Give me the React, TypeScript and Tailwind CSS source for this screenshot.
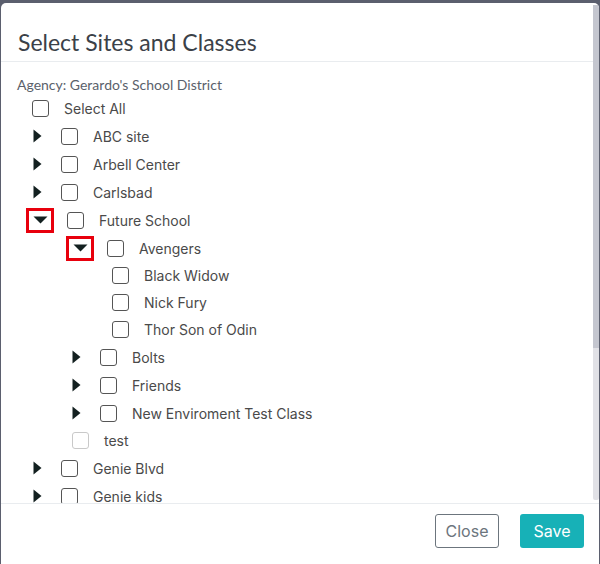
import React from "react";

type Kind = "collapsed" | "expanded" | "leaf" | "disabled";

type Item = {
  label: string;
  kind: Kind;
  pad: string;
};

const items: Item[] = [
  { label: "ABC site", kind: "collapsed", pad: "pl-[32px]" },
  { label: "Arbell Center", kind: "collapsed", pad: "pl-[32px]" },
  { label: "Carlsbad", kind: "collapsed", pad: "pl-[32px]" },
  { label: "Future School", kind: "expanded", pad: "pl-[25px]" },
  { label: "Avengers", kind: "expanded", pad: "pl-[65px]" },
  { label: "Black Widow", kind: "leaf", pad: "pl-[111px]" },
  { label: "Nick Fury", kind: "leaf", pad: "pl-[111px]" },
  { label: "Thor Son of Odin", kind: "leaf", pad: "pl-[111px]" },
  { label: "Bolts", kind: "collapsed", pad: "pl-[71px]" },
  { label: "Friends", kind: "collapsed", pad: "pl-[71px]" },
  { label: "New Enviroment Test Class", kind: "collapsed", pad: "pl-[71px]" },
  { label: "test", kind: "disabled", pad: "pl-[71px]" },
  { label: "Genie Blvd", kind: "collapsed", pad: "pl-[32px]" },
  { label: "Genie kids", kind: "collapsed", pad: "pl-[32px]" },
];

function Checkbox({ disabled }: { disabled?: boolean }) {
  return (
    <span
      className={
        disabled
          ? "block w-[17px] h-[17px] shrink-0 rounded-[3px] border border-[#c9c9c9] bg-white"
          : "block w-[17px] h-[17px] shrink-0 rounded-[3px] border border-[#555] bg-white"
      }
    />
  );
}

function TreeRow({ item }: { item: Item }) {
  if (item.kind === "collapsed") {
    return (
      <div className={`flex items-center h-[28px] ${item.pad}`}>
        <svg width="9" height="14" viewBox="0 0 9 14" className="shrink-0">
          <path d="M0.5 0.5 L8.5 7 L0.5 13.5 Z" fill="#132020" />
        </svg>
        <span className="ml-[19px]">
          <Checkbox />
        </span>
        <span className="ml-[15px]">{item.label}</span>
      </div>
    );
  }
  if (item.kind === "expanded") {
    return (
      <div className={`flex items-center h-[28px] ${item.pad}`}>
        <span className="flex items-center justify-center w-[28px] h-[25px] shrink-0 border-[3px] border-[#e8000d]">
          <svg width="15" height="8" viewBox="0 0 15 8">
            <path d="M0.5 0.5 L14.5 0.5 L7.5 7.5 Z" fill="#132020" />
          </svg>
        </span>
        <span className="ml-[13px]">
          <Checkbox />
        </span>
        <span className="ml-[15px]">{item.label}</span>
      </div>
    );
  }
  return (
    <div className={`flex items-center h-[27px] ${item.pad}`}>
      <Checkbox disabled={item.kind === "disabled"} />
      <span className="ml-[15px]">{item.label}</span>
    </div>
  );
}

export default function App() {
  return (
    <div className="w-[600px] h-[564px] bg-[#5b5f6e] pt-[3px] pl-[1px] pr-[1px] overflow-hidden">
      <div className="h-full bg-white rounded-t-[5px] flex flex-col overflow-hidden">
        <div className="flex flex-1 min-h-0">
          <div className="flex-1 flex flex-col min-w-0">
            <div className="h-[59px] shrink-0 border-b border-[#e9ecef] pl-[17px] pt-[25px]">
              <h2 className="text-[23px] leading-[28px] text-[#3b4148] font-['Lato',sans-serif]">
                Select Sites and Classes
              </h2>
            </div>
            <div className="flex-1 overflow-hidden pt-[14px]">
              <div className="pl-[16px] h-[18px] leading-[18px] text-[14px] text-[#5a616b] font-['Lato',sans-serif]">
                Agency: Gerardo's School District
              </div>
              <div className="text-[14px] text-[#4a4a4a] font-['Inter',sans-serif]">
                <div className="flex items-center h-[28px] pl-[31px]">
                  <Checkbox />
                  <span className="ml-[15px]">Select All</span>
                </div>
                {items.map((item) => (
                  <TreeRow key={item.label} item={item} />
                ))}
              </div>
            </div>
          </div>
          <div className="w-[6px] shrink-0 pt-[2px] pb-[3px] flex flex-col">
            <div className="h-[343px] bg-[#c4c6cf]" />
            <div className="flex-1 bg-[#e1e1e6] rounded-b-[2px]" />
          </div>
        </div>
        <div className="h-[61px] shrink-0 border-t border-[#e9ecef] flex justify-end items-start pt-[10px] pr-[15px] gap-[21px] font-['Inter',sans-serif] text-[16px]">
          <button className="w-[64px] h-[34px] rounded-[3px] border border-[#6c757d] text-[#6c757d] bg-white">
            Close
          </button>
          <button className="w-[64px] h-[34px] rounded-[3px] bg-[#17b1b7] text-white">
            Save
          </button>
        </div>
      </div>
    </div>
  );
}
